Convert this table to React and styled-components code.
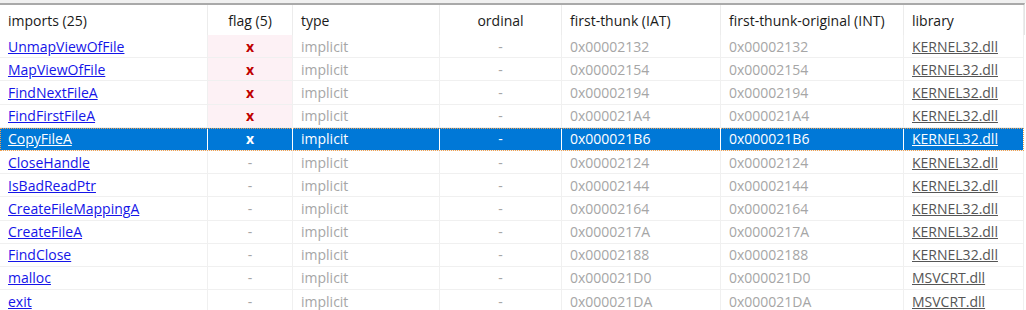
import styled, { createGlobalStyle } from "styled-components";

const GlobalStyle = createGlobalStyle`
  body {
    margin: 0;
    background: #ffffff;
    font-family: "Open Sans", "Noto Sans", sans-serif;
    font-size: 14px;
  }
`;

const COLS = "208px 85px 147px 122px 159px 183px 120px";

const rows = [
  { name: "UnmapViewOfFile", flag: true, iat: "0x00002132", lib: "KERNEL32.dll" },
  { name: "MapViewOfFile", flag: true, iat: "0x00002154", lib: "KERNEL32.dll" },
  { name: "FindNextFileA", flag: true, iat: "0x00002194", lib: "KERNEL32.dll" },
  { name: "FindFirstFileA", flag: true, iat: "0x000021A4", lib: "KERNEL32.dll" },
  { name: "CopyFileA", flag: true, iat: "0x000021B6", lib: "KERNEL32.dll", selected: true },
  { name: "CloseHandle", iat: "0x00002124", lib: "KERNEL32.dll" },
  { name: "IsBadReadPtr", iat: "0x00002144", lib: "KERNEL32.dll" },
  { name: "CreateFileMappingA", iat: "0x00002164", lib: "KERNEL32.dll" },
  { name: "CreateFileA", iat: "0x0000217A", lib: "KERNEL32.dll" },
  { name: "FindClose", iat: "0x00002188", lib: "KERNEL32.dll" },
  { name: "malloc", iat: "0x000021D0", lib: "MSVCRT.dll" },
  { name: "exit", iat: "0x000021DA", lib: "MSVCRT.dll" },
];

function App() {
  return (
    <>
      <GlobalStyle />
      <Frame>
        <Header>
          <HeadCell>imports (25)</HeadCell>
          <HeadCell $center>flag (5)</HeadCell>
          <HeadCell>type</HeadCell>
          <HeadCell $center>ordinal</HeadCell>
          <HeadCell>first-thunk (IAT)</HeadCell>
          <HeadCell>first-thunk-original (INT)</HeadCell>
          <HeadCell>library</HeadCell>
        </Header>
        {rows.map((r) => {
          const sel = r.selected;
          return (
            <Row key={r.name} $selected={sel}>
              <Cell $selected={sel}><Link $selected={sel}>{r.name}</Link></Cell>
              <FlagCell $muted $flagged={r.flag} $selected={sel}>
                {r.flag ? <Mark $selected={sel}>x</Mark> : "-"}
              </FlagCell>
              <Cell $muted $selected={sel}>implicit</Cell>
              <Cell $muted $center $selected={sel}>-</Cell>
              <Cell $muted $selected={sel}>{r.iat}</Cell>
              <Cell $muted $selected={sel}>{r.iat}</Cell>
              <Cell $selected={sel}><LibLink $selected={sel}>{r.lib}</LibLink></Cell>
            </Row>
          );
        })}
      </Frame>
    </>
  );
}

export default App;

const Frame = styled.div`
  width: 1026px;
  height: 310px;
  overflow: hidden;
  background: #ffffff;
  border-top: 3px solid #f0f0f0;
  box-sizing: border-box;
`;

const Header = styled.div`
  display: grid;
  grid-template-columns: ${COLS};
  height: 30px;
  border-top: 2px solid #a9a9a9;
  border-right: 1px solid #e5e5e5;
  width: 1024px;
`;

const HeadCell = styled.div`
  display: flex;
  align-items: center;
  justify-content: ${(p) => (p.$center ? "center" : "flex-start")};
  padding: 0 8px;
  color: #1a1a1a;
  border-right: 1px solid #ececec;
  white-space: nowrap;
`;

const Row = styled.div`
  display: grid;
  grid-template-columns: ${COLS};
  height: 23.2px;
  width: 1024px;
  box-sizing: border-box;
  border-bottom: 1px solid #f0f0f0;
  background: ${(p) => (p.$selected ? "#0078d7" : "transparent")};
  outline: ${(p) => (p.$selected ? "1px dotted #f0a050" : "none")};
  outline-offset: -1px;
`;

const Cell = styled.div`
  display: flex;
  align-items: center;
  justify-content: ${(p) => (p.$center ? "center" : "flex-start")};
  padding: 0 8px;
  white-space: nowrap;
  color: ${(p) => (p.$selected ? "#ffffff" : p.$muted ? "#a6a6a6" : "#1a1a1a")};
  border-right: 1px solid ${(p) => (p.$selected ? "#ffffff" : "#f0f0f0")};
`;

const FlagCell = styled(Cell)`
  justify-content: center;
  background: ${(p) => (p.$selected ? "transparent" : p.$flagged ? "#fdf1f5" : "transparent")};
`;

const Mark = styled.span`
  color: ${(p) => (p.$selected ? "#ffffff" : "#c00000")};
  font-weight: 700;
`;

const Link = styled.a`
  color: ${(p) => (p.$selected ? "#ffffff" : "#1515e8")};
  text-decoration: underline;
`;

const LibLink = styled.a`
  color: ${(p) => (p.$selected ? "#ffffff" : "#555555")};
  text-decoration: underline;
`;
